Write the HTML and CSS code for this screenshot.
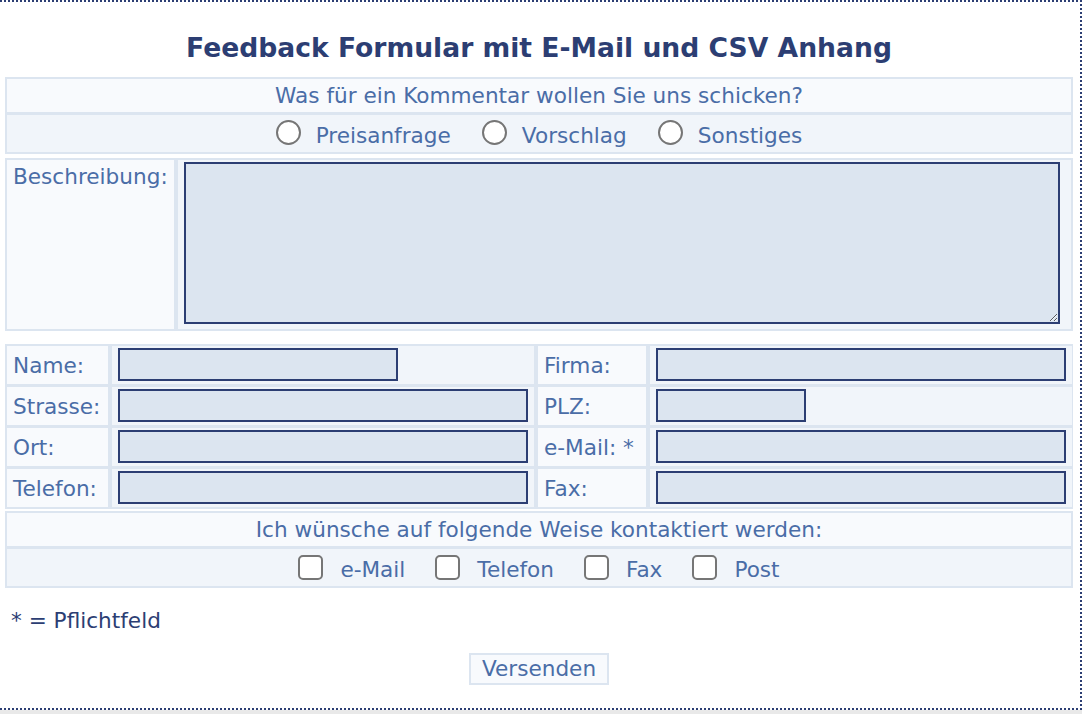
FILE: index.html
```html
<!DOCTYPE html>
<html lang="de">
<head>
  <meta charset="utf-8">
  <meta name="viewport" content="width=device-width, initial-scale=1.0">
  <title>Feedback Formular</title>
  <link rel="stylesheet" href="styles.css">
</head>
<body>
  <div class="page">
    <h1 class="title">Feedback Formular mit E-Mail und CSV Anhang</h1>

    <form class="feedback" action="#" method="post">
      <div class="panel panel-type">
        <div class="cell cell-light cell-center">Was für ein Kommentar wollen Sie uns schicken?</div>
        <div class="cell cell-tint options options-type">
          <label class="option"><input type="radio" name="typ" value="preis" class="radio">Preisanfrage</label>
          <label class="option"><input type="radio" name="typ" value="vorschlag" class="radio">Vorschlag</label>
          <label class="option"><input type="radio" name="typ" value="sonstiges" class="radio">Sonstiges</label>
        </div>
      </div>

      <div class="panel panel-text">
        <div class="cell cell-light cell-label">Beschreibung:</div>
        <div class="cell cell-tint cell-area"><textarea class="area" name="beschreibung"></textarea></div>
      </div>

      <div class="panel panel-address">
        <div class="cell cell-light cell-label">Name:</div>
        <div class="cell cell-tint cell-field"><input type="text" name="name" class="field field-short"></div>
        <div class="cell cell-light cell-label">Firma:</div>
        <div class="cell cell-tint cell-field"><input type="text" name="firma" class="field"></div>

        <div class="cell cell-light cell-label">Strasse:</div>
        <div class="cell cell-tint cell-field"><input type="text" name="strasse" class="field"></div>
        <div class="cell cell-light cell-label">PLZ:</div>
        <div class="cell cell-tint cell-field"><input type="text" name="plz" class="field field-zip"></div>

        <div class="cell cell-light cell-label">Ort:</div>
        <div class="cell cell-tint cell-field"><input type="text" name="ort" class="field"></div>
        <div class="cell cell-light cell-label">e-Mail: *</div>
        <div class="cell cell-tint cell-field"><input type="text" name="email" class="field"></div>

        <div class="cell cell-light cell-label">Telefon:</div>
        <div class="cell cell-tint cell-field"><input type="text" name="telefon" class="field"></div>
        <div class="cell cell-light cell-label">Fax:</div>
        <div class="cell cell-tint cell-field"><input type="text" name="fax" class="field"></div>
      </div>

      <div class="panel panel-contact">
        <div class="cell cell-light cell-center">Ich wünsche auf folgende Weise kontaktiert werden:</div>
        <div class="cell cell-tint options options-contact">
          <label class="option option-check"><input type="checkbox" name="kontakt_mail" class="check">e-Mail</label>
          <label class="option option-check"><input type="checkbox" name="kontakt_telefon" class="check">Telefon</label>
          <label class="option option-check"><input type="checkbox" name="kontakt_fax" class="check">Fax</label>
          <label class="option option-check"><input type="checkbox" name="kontakt_post" class="check">Post</label>
        </div>
      </div>

      <p class="note">* = Pflichtfeld</p>

      <div class="actions">
        <button type="submit" class="btn">Versenden</button>
      </div>
    </form>
  </div>
</body>
</html>
```

FILE: styles.css
```css
body {
  margin: 0;
  background: #e9e9e9;
  font-family: Verdana, 'DejaVu Sans', sans-serif;
  font-size: 21.6px;
  color: #4a6da7;
}

.page {
  box-sizing: border-box;
  width: 1082px;
  height: 710px;
  padding: 0 7px 0 5px;
  background: #fff;
  border: 2px dotted #2c3e73;
  border-left: none;
}

.title {
  margin: 31px 0 0 0;
  font-size: 26.6px;
  line-height: 30px;
  font-weight: bold;
  text-align: center;
  color: #2c3e73;
}

.feedback {
  margin: 0;
}

/* panels: light blue frame, cells sit on it with small gaps */
.panel {
  display: grid;
  background: #dce5f0;
  padding: 2px;
  row-gap: 3px;
  column-gap: 4px;
}

.panel-type {
  margin-top: 14px;
  grid-template-rows: 33px 37px;
}

.panel-text {
  margin-top: 4px;
  grid-template-columns: 167px 1fr;
  height: 169px;
}

.panel-address {
  margin-top: 13px;
  grid-template-columns: 101px 422px 108px 1fr;
  grid-auto-rows: 38px;
}

.panel-contact {
  margin-top: 2px;
  grid-template-rows: 33px 37px;
}

.cell {
  line-height: 25px;
}

.cell-light {
  background: #f8fafd;
}

.cell-tint {
  background: #f1f5fa;
}

.cell-center {
  display: flex;
  align-items: center;
  justify-content: center;
}

.cell-label {
  padding: 0 6px;
  display: flex;
  align-items: center;
  white-space: nowrap;
}

.panel-text .cell-label {
  align-items: flex-start;
  padding-top: 4px;
}

.cell-area {
  padding: 2px 6px;
}

.area {
  display: block;
  box-sizing: border-box;
  width: 876px;
  height: 162px;
  margin: 0;
  border: 2px solid #2c3e73;
  border-radius: 0;
  background: #dce5f0;
  font-family: inherit;
  font-size: 16px;
  color: #2c3e73;
  outline: none;
}

.cell-field {
  padding: 2px 6px 0 6px;
}

.field {
  display: block;
  box-sizing: border-box;
  width: 410px;
  height: 33px;
  margin: 0;
  border: 2px solid #2c3e73;
  border-radius: 0;
  background: #dce5f0;
  font-family: inherit;
  font-size: 16px;
  color: #2c3e73;
  outline: none;
}

.field-short {
  width: 280px;
}

.field-zip {
  width: 150px;
}

/* radio and checkbox rows */
.options {
  display: flex;
  align-items: center;
  justify-content: center;
  padding-top: 3px;
}

.options-type {
  gap: 31px;
}

.options-contact {
  gap: 30px;
}

.option {
  display: inline-flex;
  align-items: center;
  gap: 15px;
  cursor: pointer;
}

.option-check {
  gap: 17px;
}

.radio {
  appearance: none;
  -webkit-appearance: none;
  box-sizing: border-box;
  width: 25px;
  height: 25px;
  margin: 0 0 6px 0;
  border: 2px solid #767676;
  border-radius: 50%;
  background: #fff;
}

.check {
  appearance: none;
  -webkit-appearance: none;
  box-sizing: border-box;
  width: 25px;
  height: 25px;
  margin: 0 0 4px 0;
  border: 2px solid #767676;
  border-radius: 5px;
  background: #fff;
}

.note {
  margin: 20px 0 0 6px;
  line-height: 25px;
  color: #2c3e73;
}

.actions {
  margin-top: 20px;
  text-align: center;
}

.btn {
  padding: 1px 11px;
  border: 2px solid #dce5f0;
  background: #f8fafd;
  color: #4a6da7;
  font-family: inherit;
  font-size: 21.6px;
  line-height: 26px;
  cursor: pointer;
}
```
